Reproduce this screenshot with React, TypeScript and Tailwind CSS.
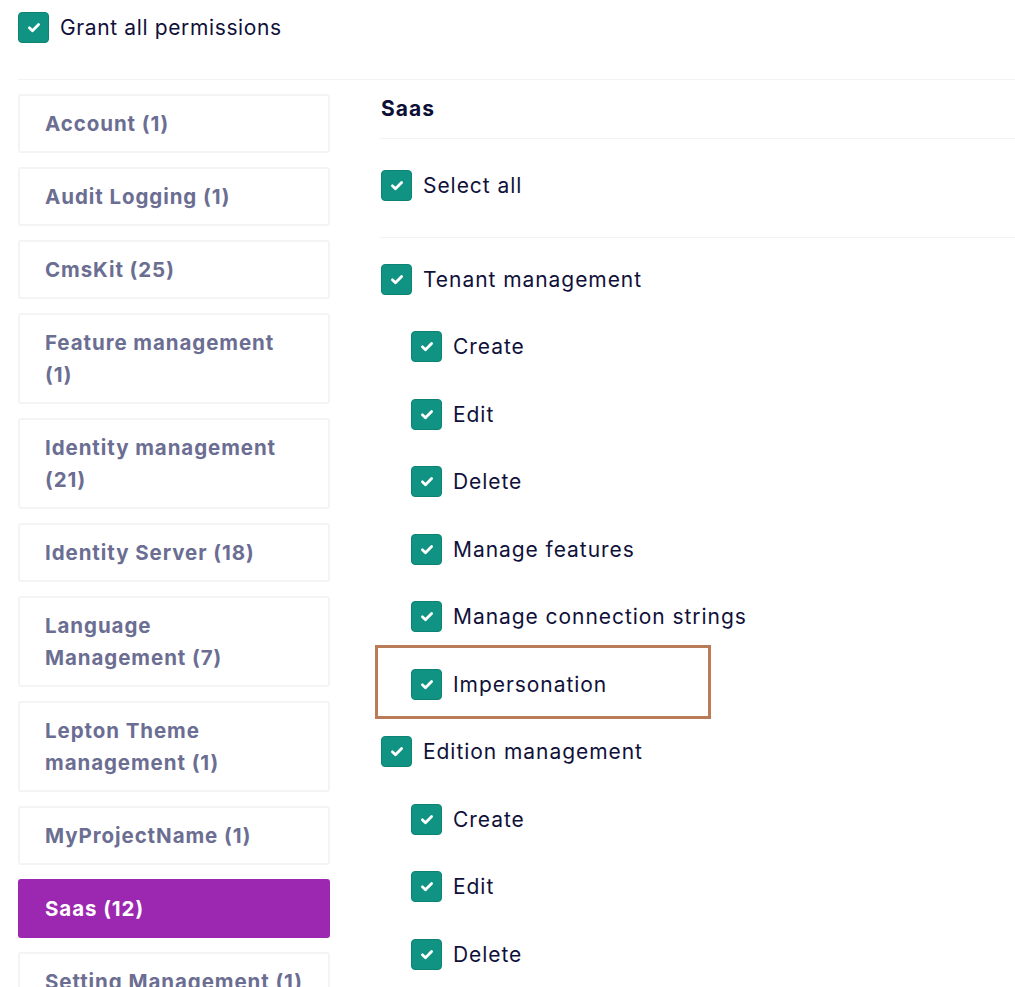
import React from "react";

type Group = { lines: string[]; active?: boolean };

const groups: Group[] = [
  { lines: ["Account (1)"] },
  { lines: ["Audit Logging (1)"] },
  { lines: ["CmsKit (25)"] },
  { lines: ["Feature management", "(1)"] },
  { lines: ["Identity management", "(21)"] },
  { lines: ["Identity Server (18)"] },
  { lines: ["Language", "Management (7)"] },
  { lines: ["Lepton Theme", "management (1)"] },
  { lines: ["MyProjectName (1)"] },
  { lines: ["Saas (12)"], active: true },
  { lines: ["Setting Management (1)"] },
];

type Perm = { label: string; child?: boolean; highlight?: boolean };

const permissions: Perm[] = [
  { label: "Tenant management" },
  { label: "Create", child: true },
  { label: "Edit", child: true },
  { label: "Delete", child: true },
  { label: "Manage features", child: true },
  { label: "Manage connection strings", child: true },
  { label: "Impersonation", child: true, highlight: true },
  { label: "Edition management" },
  { label: "Create", child: true },
  { label: "Edit", child: true },
  { label: "Delete", child: true },
];

function CheckBox() {
  return (
    <span className="grid size-[31px] shrink-0 place-items-center rounded-[4px] border border-[#0d8473] bg-[#109382]">
      <svg viewBox="0 0 12 10" className="h-[11px] w-[14px]" aria-hidden="true">
        <path
          d="M1.8 5.3 4.6 8 10.2 2.2"
          fill="none"
          stroke="#fff"
          strokeWidth="2.5"
          strokeLinecap="round"
          strokeLinejoin="round"
        />
      </svg>
    </span>
  );
}

function PermRow({ perm }: { perm: Perm }) {
  return (
    <div className={`relative flex h-[31px] items-center gap-[11px] ${perm.child ? "pl-[30px]" : ""}`}>
      {perm.highlight && (
        <span className="pointer-events-none absolute left-[-6px] top-[-24px] h-[74px] w-[336px] border-[3px] border-[#b97b58]" />
      )}
      <CheckBox />
      <span className="text-[21px] leading-none tracking-[0.045em] text-[#10113a]">{perm.label}</span>
    </div>
  );
}

export default function App() {
  return (
    <div className="h-[987px] w-[1015px] overflow-hidden bg-white font-['Inter',sans-serif]">
      <div className="flex items-center gap-[11px] pl-[18px] pt-[12px]">
        <CheckBox />
        <span className="text-[21px] leading-none tracking-[0.03em] text-[#10113a]">Grant all permissions</span>
      </div>

      <div className="ml-[18px] mt-[36px] border-t border-[#f3f3f6]" />

      <div className="flex pt-[14px] pl-[18px]">
        <nav className="flex w-[312px] shrink-0 flex-col gap-[14px]">
          {groups.map((g) => (
            <div
              key={g.lines.join(" ")}
              className={`rounded-[3px] border-2 px-[25px] py-[11.5px] text-[20.5px] font-bold leading-[32px] tracking-[0.045em] ${
                g.active
                  ? "border-[#9c27b0] bg-[#9c27b0] text-white"
                  : "border-[#f4f4f6] bg-white text-[#6b6e92]"
              }`}
            >
              {g.lines.map((l) => (
                <div key={l} className="whitespace-nowrap">
                  {l}
                </div>
              ))}
            </div>
          ))}
        </nav>

        <section className="ml-[50px] flex-1">
          <div className="border-b border-[#f3f3f6] pb-[14px]">
            <h2 className="pl-[1px] text-[21px] font-bold leading-[30px] tracking-[0.05em] text-[#0d0f37]">Saas</h2>
          </div>
          <div className="border-b border-[#f3f3f6] pb-[36px] pl-[1px] pt-[31px]">
            <PermRow perm={{ label: "Select all" }} />
          </div>
          <div className="flex flex-col gap-[36.5px] pl-[1px] pt-[25.5px]">
            {permissions.map((p, i) => (
              <PermRow key={i} perm={p} />
            ))}
          </div>
        </section>
      </div>
    </div>
  );
}
